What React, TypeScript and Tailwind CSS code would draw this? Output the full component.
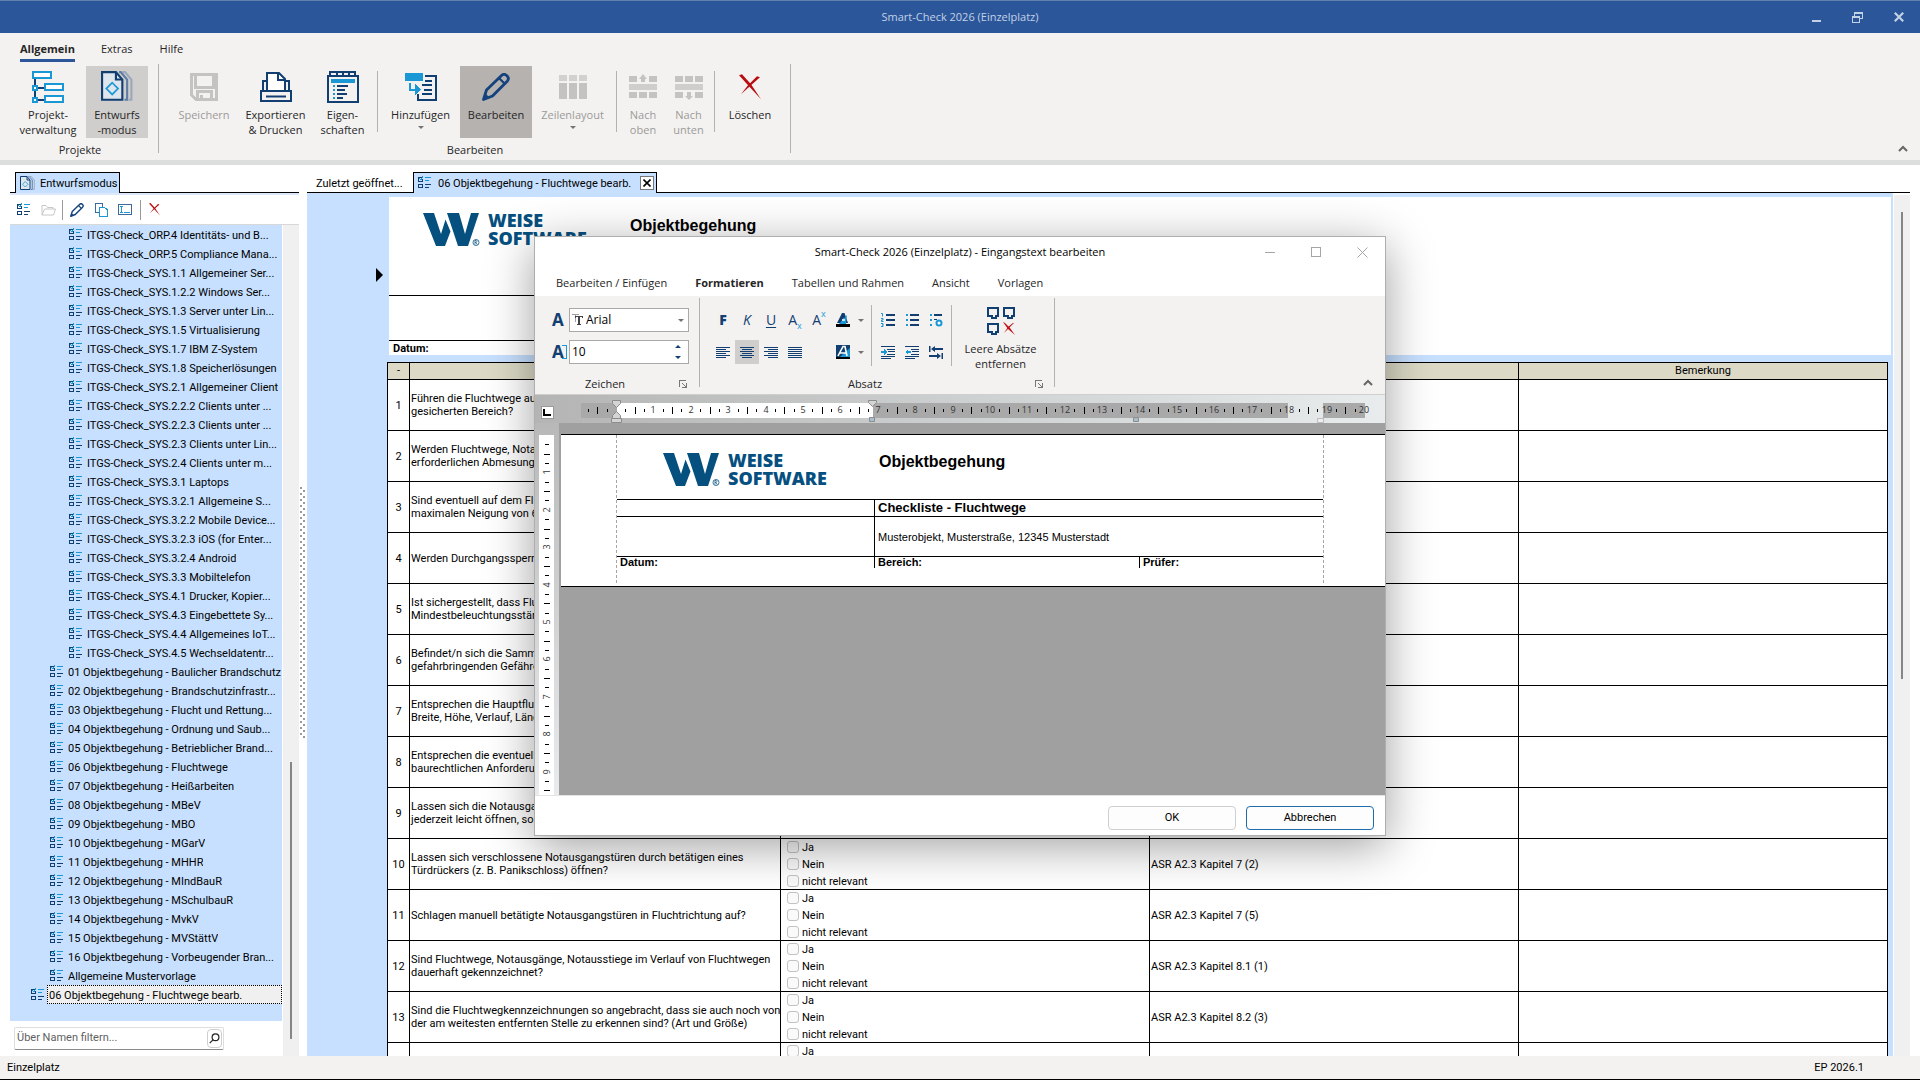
import type { ReactNode } from "react";
import { clsx } from "clsx";

const NAVY = "#123f72";
const CYAN = "#1a98d5";

const treeItems: { label: string; level: number }[] = [
  ...[
    "ORP.4 Identitäts- und B...",
    "ORP.5 Compliance Mana...",
    "SYS.1.1 Allgemeiner Ser...",
    "SYS.1.2.2 Windows Ser...",
    "SYS.1.3 Server unter Lin...",
    "SYS.1.5 Virtualisierung",
    "SYS.1.7 IBM Z-System",
    "SYS.1.8 Speicherlösungen",
    "SYS.2.1 Allgemeiner Client",
    "SYS.2.2.2 Clients unter ...",
    "SYS.2.2.3 Clients unter ...",
    "SYS.2.3 Clients unter Lin...",
    "SYS.2.4 Clients unter m...",
    "SYS.3.1 Laptops",
    "SYS.3.2.1 Allgemeine S...",
    "SYS.3.2.2 Mobile Device...",
    "SYS.3.2.3 iOS (for Enter...",
    "SYS.3.2.4 Android",
    "SYS.3.3 Mobiltelefon",
    "SYS.4.1 Drucker, Kopier...",
    "SYS.4.3 Eingebettete Sy...",
    "SYS.4.4 Allgemeines IoT...",
    "SYS.4.5 Wechseldatentr...",
  ].map(name => ({ label: `ITGS-Check_${name}`, level: 2 })),
  ...[
    "Baulicher Brandschutz",
    "Brandschutzinfrastr...",
    "Flucht und Rettung...",
    "Ordnung und Saub...",
    "Betrieblicher Brand...",
    "Fluchtwege",
    "Heißarbeiten",
    "MBeV",
    "MBO",
    "MGarV",
    "MHHR",
    "MIndBauR",
    "MSchulbauR",
    "MvkV",
    "MVStättV",
    "Vorbeugender Bran...",
  ].map((name, i) => ({ label: `${String(i + 1).padStart(2, "0")} Objektbegehung - ${name}`, level: 1 })),
  { label: "Allgemeine Mustervorlage", level: 1 },
  { label: "06 Objektbegehung - Fluchtwege bearb.", level: 0 },
];

const questions: { lines: string[]; source: string }[] = [
  { lines: ["Führen die Fluchtwege auf möglichst kurzem Weg ins Freie oder", "gesicherten Bereich?"], source: "" },
  { lines: ["Werden Fluchtwege, Notausgänge und Notausstiege in den", "erforderlichen Abmesungen freigehalten?"], source: "" },
  { lines: ["Sind eventuell auf dem Fluchtweg vorhandene Rampen mit einer", "maximalen Neigung von 6 % ausgeführt?"], source: "" },
  { lines: ["Werden Durchgangssperren vermieden?"], source: "" },
  { lines: ["Ist sichergestellt, dass Fluchtwege mit der erforderlichen", "Mindestbeleuchtungsstärke beleuchtet sind?"], source: "" },
  { lines: ["Befindet/n sich die Sammelstelle/n außerhalb des", "gefahrbringenden Gefährdungsbereiches?"], source: "" },
  { lines: ["Entsprechen die Hauptfluchtwege den Anforderungen an", "Breite, Höhe, Verlauf, Länge?"], source: "" },
  { lines: ["Entsprechen die eventuell vorhandenen Nebenfluchtwege den", "baurechtlichen Anforderungen?"], source: "" },
  { lines: ["Lassen sich die Notausgangstüren von innen ohne Hilfsmittel", "jederzeit leicht öffnen, solange sich Personen dort aufhalten?"], source: "" },
  { lines: ["Lassen sich verschlossene Notausgangstüren durch betätigen eines", "Türdrückers (z. B. Panikschloss) öffnen?"], source: "ASR A2.3 Kapitel 7 (2)" },
  { lines: ["Schlagen manuell betätigte Notausgangstüren in Fluchtrichtung auf?"], source: "ASR A2.3 Kapitel 7 (5)" },
  { lines: ["Sind Fluchtwege, Notausgänge, Notausstiege im Verlauf von Fluchtwegen", "dauerhaft gekennzeichnet?"], source: "ASR A2.3 Kapitel 8.1 (1)" },
  { lines: ["Sind die Fluchtwegkennzeichnungen so angebracht, dass sie auch noch von", "der am weitesten entfernten Stelle zu erkennen sind? (Art und Größe)"], source: "ASR A2.3 Kapitel 8.2 (3)" },
];

const answers = ["Ja", "Nein", "nicht relevant"];

export default function App() {
  return (
    <div className="relative flex h-screen flex-col overflow-hidden bg-white font-['Roboto',sans-serif] text-[11px] text-black">
      <TitleBar />
      <Ribbon />
      <main className="flex min-h-0 flex-1 pr-[10px] pl-[10px]">
        <Sidebar />
        <div className="flex w-2 shrink-0 items-center pb-5">
          <Splitter />
        </div>
        <Workspace />
      </main>
      <footer className="flex h-6 shrink-0 items-center justify-between border-b border-black bg-[#f3f2f1] pt-0.5 pr-[56px] pl-[7px]">
        <span>Einzelplatz</span>
        <span>EP 2026.1</span>
      </footer>
      <EditorDialog />
    </div>
  );
}

function TitleBar() {
  return (
    <header className="relative flex h-[33px] shrink-0 items-center justify-center border-t border-[#6080ad] bg-[#2b579a] font-['Open_Sans',sans-serif] text-[#c3d1e6]">
      <h1>Smart-Check 2026 (Einzelplatz)</h1>
      <div className="absolute right-3 flex items-center gap-[22px]">
        <button aria-label="Minimieren" className="flex h-5 w-[19px] items-center justify-center">
          <svg width="10" height="12" shapeRendering="crispEdges"><path d="M0 9h9v2H0z" fill="currentColor" /></svg>
        </button>
        <button aria-label="Verkleinern" className="flex h-5 w-[19px] items-center justify-center">
          <svg width="11" height="11" fill="none" stroke="currentColor" shapeRendering="crispEdges">
            <path d="M.5 4h7v6.500h-7zM0 5h8M2.500 4V.5h8v6h-3M2 1.500h9" />
          </svg>
        </button>
        <button aria-label="Schließen" className="flex h-5 w-[19px] items-center justify-center">
          <svg width="10" height="10" stroke="currentColor" strokeWidth="2.200"><path d="M.8.8l8.400 8.400M9.200.8L.8 9.200" /></svg>
        </button>
      </div>
    </header>
  );
}

function Ribbon() {
  return (
    <section className="relative shrink-0 border-b-[5px] border-[#dcdddd] bg-[#f3f2f1] font-['Open_Sans',sans-serif] text-[#262626]">
      <nav className="flex h-[29px] items-end pl-5">
        <button className="h-[22px] border-b-[3px] border-[#2b579a] pb-px font-bold">Allgemein</button>
        <button className="ml-[26px] h-[22px] pb-1">Extras</button>
        <button className="ml-[27px] h-[22px] pb-1">Hilfe</button>
      </nav>
      <div className="flex h-[98px] pt-0.5">
        <RibbonGroup label="Projekte" className="pl-3 pr-2.5">
          <RibbonButton className="w-[74px] pr-0.5" icon={<ProjectIcon />} lines={["Projekt-", "verwaltung"]} />
          <RibbonButton className="w-[62px] bg-[#cfcecc]" icon={<DraftIcon size={32} />} lines={["Entwurfs", "-modus"]} />
        </RibbonGroup>
        <RibbonGroup label="Bearbeiten" className="pr-2 pl-[9px]">
          <RibbonButton className="w-[72px]" disabled icon={<SaveIcon />} lines={["Speichern"]} />
          <RibbonButton className="w-[71px]" icon={<PrintIcon />} lines={["Exportieren", "& Drucken"]} />
          <RibbonButton className="w-[63px]" icon={<PropertiesIcon />} lines={["Eigen-", "schaften"]} />
          <RibbonDivider />
          <RibbonButton className="w-[79px]" icon={<AddIcon />} lines={["Hinzufügen"]} caret />
          <RibbonButton className="w-[72px] bg-[#b5b2b0]" icon={<PencilIcon size={28} />} lines={["Bearbeiten"]} />
          <RibbonButton className="w-[81px]" disabled icon={<RowLayoutIcon />} lines={["Zeilenlayout"]} caret />
          <RibbonDivider />
          <RibbonButton className="w-[46px]" disabled icon={<MoveIcon direction="up" />} lines={["Nach", "oben"]} />
          <RibbonButton className="w-[45px]" disabled icon={<MoveIcon direction="down" />} lines={["Nach", "unten"]} />
          <RibbonDivider />
          <RibbonButton className="w-[64px]" icon={<DeleteIcon width={22} />} lines={["Löschen"]} />
        </RibbonGroup>
      </div>
      <button aria-label="Menüband reduzieren" className="absolute right-3 bottom-2"><CollapseIcon /></button>
    </section>
  );
}

function RibbonGroup({ label, className, children }: { label: string; className?: string; children: ReactNode }) {
  return (
    <div className={clsx("flex h-[89px] flex-col items-center border-r border-[#b4b2b0]", className)}>
      <div className="flex pt-0.5">{children}</div>
      <span className="pt-1 leading-4">{label}</span>
    </div>
  );
}

function RibbonDivider() {
  return <div className="mx-[3px] mt-[5px] h-[61px] w-px bg-[#b4b2b0]" />;
}

function RibbonButton({ icon, lines, className, disabled, caret }: {
  icon: ReactNode;
  lines: string[];
  className?: string;
  disabled?: boolean;
  caret?: boolean;
}) {
  return (
    <button
      className={clsx("flex h-[72px] flex-col items-center leading-[15px]", disabled && "text-[#9c9a98]", className)}
      disabled={disabled}
    >
      <span className="mb-[3px] flex h-[38px] items-center pt-1">{icon}</span>
      {lines.map(line => <span className="whitespace-nowrap" key={line}>{line}</span>)}
      {caret ? <CaretIcon className="mt-1" /> : null}
    </button>
  );
}

function Sidebar() {
  return (
    <aside className="flex w-[289px] shrink-0 flex-col pt-[7px]">
      <div className="flex h-[21px] border-b border-black pl-[5px]">
        <button className="-mb-px flex h-[21px] w-[105px] items-center gap-[5px] border border-b-0 border-black bg-[#c7e0ff] pl-1">
          <DraftIcon size={15} />
          <span className="pt-0.5 whitespace-nowrap">Entwurfsmodus</span>
        </button>
      </div>
      <div className="flex h-8 shrink-0 items-center border-t-2 border-b border-t-[#dbe9fa] border-b-[#d8d8d8] pl-[7px]">
        <button aria-label="Checkliste"><ChecklistIcon /></button>
        <button aria-label="Öffnen" className="ml-[11px]"><FolderIcon /></button>
        <div className="ml-1.5 h-5 w-px bg-[#9a9a9a]" />
        <button aria-label="Bearbeiten" className="ml-[7px]"><PencilIcon size={14} /></button>
        <button aria-label="Kopieren" className="ml-[11px]"><CopyIcon /></button>
        <button aria-label="Umbenennen" className="ml-[10px]"><RenameIcon /></button>
        <div className="ml-[7px] h-5 w-px bg-[#9a9a9a]" />
        <button aria-label="Löschen" className="ml-2"><DeleteIcon width={11} /></button>
      </div>
      <div className="flex min-h-0 flex-1">
        <div className="flex min-w-0 flex-1 flex-col">
          <ul className="min-h-0 flex-1 overflow-hidden bg-[#c7e0ff]">
            {treeItems.map(({ label, level }) => (
              <li
                className={clsx("flex h-[19px] items-center", level === 2 && "pl-[59px]", level === 1 && "pl-[40px]", level === 0 && "pl-[21px]")}
                key={label}
              >
                <ChecklistIcon />
                <span className={clsx(
                  "h-[19px] min-w-0 overflow-hidden whitespace-nowrap",
                  level === 0 ? "ml-[3px] flex-1 border border-dotted border-black bg-[#f0f0f0] pl-px leading-[19px]" : "ml-[5px] pt-px leading-[19px]",
                )}
                >
                  {label}
                </span>
              </li>
            ))}
          </ul>
          <div className="flex h-[35px] shrink-0 items-center pl-1">
            <div className="flex h-[23px] w-[210px] items-center rounded-xs border border-[#dedede] border-b-[#8a8a8a] pr-px pl-0.5">
              <input
                aria-label="Über Namen filtern"
                className="min-w-0 flex-1 outline-none placeholder:text-[#5f5f5f]"
                placeholder="Über Namen filtern..."
              />
              <button aria-label="Suchen" className="flex h-[19px] w-[15px] items-center justify-center rounded-sm border border-[#cfcfcf]">
                <svg width="11" height="11" fill="none" stroke="#222" strokeWidth="1.200"><circle cx="6.500" cy="4.200" r="3.400" /><path d="M4 6.800L.7 10.200" /></svg>
              </button>
            </div>
          </div>
        </div>
        <div className="ml-px w-4 shrink-0 bg-[#f0f0f0]">
          <div className="ml-[7px] mt-[537px] h-[277px] w-0.5 bg-[#868686]" />
        </div>
      </div>
    </aside>
  );
}

function Splitter() {
  return (
    <svg className="mt-6" width="6" height="252" shapeRendering="crispEdges">
      {Array.from({ length: 42 }, (_, i) => (
        <g fill="#9a9a9a" key={i}>
          <rect height="2" width="2" x="1" y={i * 6} />
          <rect height="2" width="2" x="4" y={i * 6 + 3} />
        </g>
      ))}
    </svg>
  );
}

function Workspace() {
  return (
    <section className="flex min-w-0 flex-1 flex-col pt-[7px]">
      <div className="flex h-[21px] border-b border-black pl-[9px]">
        <button className="w-[97px] pt-1 text-left">Zuletzt geöffnet...</button>
        <div className="-mb-px flex h-[21px] w-[244px] items-center border border-b-0 border-black bg-[#c7e0ff] pr-0.5 pl-1">
          <ChecklistIcon />
          <span className="ml-[7px] flex-1 pt-0.5 whitespace-nowrap">06 Objektbegehung - Fluchtwege bearb.</span>
          <button aria-label="Tab schließen" className="flex size-[14px] items-center justify-center border border-[#777] bg-white">
            <svg width="8" height="8" stroke="#000" strokeWidth="1.600"><path d="M.5.5l7 7M7.500.5l-7 7" /></svg>
          </button>
        </div>
      </div>
      <div className="flex min-h-0 flex-1">
        <div className="flex min-w-0 flex-1 flex-col overflow-hidden bg-[#c7e0ff] pt-1 pr-0.5">
          <div className="flex shrink-0">
            <div className="flex w-[82px] items-center justify-end pr-[6px]">
              <svg className="-mt-0.5" width="7" height="14"><path d="M0 0l7 7-7 7z" /></svg>
            </div>
            <div className="min-w-0 flex-1 bg-white">
              <div className="flex h-[99px] w-[720px] items-start border-b border-black pt-4 pl-[34px]">
                <WeiseLogo />
                <span className="ml-[39px] pt-[3px] font-['Liberation_Sans',sans-serif] text-base leading-5 font-bold">Objektbegehung</span>
              </div>
              <div className="h-[45px] w-[720px] border-b border-black" />
              <p className="h-[14px] pt-px pl-1 leading-[14px] font-bold">Datum:</p>
            </div>
          </div>
          <div className="mt-[7px] pr-[3px] pl-20">
            <table className="w-full table-fixed border-collapse bg-white">
              <colgroup>
                <col className="w-[22px]" />
                <col className="w-[371px]" />
                <col />
                <col />
                <col />
              </colgroup>
              <thead>
                <tr className="h-[17px] bg-[#dcdac6]">
                  {["-", "", "", "", "Bemerkung"].map((heading, i) => (
                    <th className="border border-black p-0 leading-4 font-normal" key={i}>{heading}</th>
                  ))}
                </tr>
              </thead>
              <tbody>
                {questions.map(({ lines, source }, i) => (
                  <tr className="h-[51px]" key={lines[0]}>
                    <td className="border border-black p-0 pt-0.5 text-center">{i + 1}</td>
                    <td className="overflow-hidden border border-black p-0 pl-px leading-[13px] whitespace-nowrap">
                      {lines.map(line => <div key={line}>{line}</div>)}
                    </td>
                    <td className="border border-black p-0"><AnswerOptions row={i + 1} /></td>
                    <td className="border border-black p-0 pt-0.5 pl-px">{source}</td>
                    <td className="border border-black" />
                  </tr>
                ))}
                <tr className="h-[51px]">
                  <td className="border border-black" />
                  <td className="border border-black" />
                  <td className="border border-black p-0"><AnswerOptions row={14} /></td>
                  <td className="border border-black" />
                  <td className="border border-black" />
                </tr>
              </tbody>
            </table>
          </div>
        </div>
        <div className="mt-0.5 ml-px w-4 shrink-0 bg-[#f0f0f0]">
          <div className="mt-[17px] ml-[7px] h-[467px] w-0.5 bg-[#868686]" />
        </div>
      </div>
    </section>
  );
}

function AnswerOptions({ row }: { row: number }) {
  return (
    <div className="flex h-[50px] flex-col justify-between pl-1.5">
      {answers.map(answer => (
        <label className="flex h-4 items-center gap-[3px]" key={answer}>
          <input className="size-3 appearance-none rounded-[3px] border border-[#c2c2c2] bg-[#fafafa]" name={`row-${row}`} type="checkbox" />
          <span className="pt-0.5 leading-3">{answer}</span>
        </label>
      ))}
    </div>
  );
}

function EditorDialog() {
  return (
    <div
      aria-label="Eingangstext bearbeiten"
      className="absolute inset-x-0 top-[236px] mx-auto w-[852px] border border-[#aeaeae] bg-white font-['Open_Sans',sans-serif] text-[#262626] shadow-[0_10px_44px_rgba(0,0,0,0.38)]"
      role="dialog"
    >
      <header className="relative flex h-[30px] items-center justify-center text-black">
        <h2>Smart-Check 2026 (Einzelplatz) - Eingangstext bearbeiten</h2>
        <div className="absolute right-[17px] flex gap-[35px] text-[#a5a5a5]">
          <button aria-label="Minimieren"><svg width="11" height="11" shapeRendering="crispEdges"><path d="M0 5h10v1H0z" fill="currentColor" /></svg></button>
          <button aria-label="Maximieren"><svg width="11" height="11" fill="none" stroke="currentColor"><rect height="9" width="9" x=".5" y=".5" /></svg></button>
          <button aria-label="Schließen"><svg width="11" height="11" stroke="currentColor"><path d="M.5.5l10 10M10.500.5l-10 10" /></svg></button>
        </div>
      </header>
      <nav className="flex h-[29px] items-center gap-7 pt-1 pl-[21px]">
        <button>Bearbeiten / Einfügen</button>
        <button className="font-bold">Formatieren</button>
        <button>Tabellen und Rahmen</button>
        <button>Ansicht</button>
        <button>Vorlagen</button>
      </nav>
      <div className="relative flex h-[99px] border-b border-[#cfcfcf] bg-[#f3f2f1] pt-0.5">
        <FontGroup />
        <ParagraphGroup />
        <button aria-label="Menüband reduzieren" className="absolute right-3 bottom-2"><CollapseIcon /></button>
      </div>
      <HorizontalRuler />
      <div className="flex h-[372px] bg-[#a0a0a0]">
        <VerticalRuler />
        <div className="min-w-0 flex-1 pt-[11px] pl-0.5">
          <EditorPage />
        </div>
      </div>
      <footer className="flex h-10 items-end justify-end gap-2.5 border-t border-[#e4e4e4] pr-[11px] pb-[5px] font-['Roboto',sans-serif] text-black">
        <button className="h-6 w-32 rounded-sm border border-[#cfcfcf] bg-[#fdfdfd]">OK</button>
        <button className="h-6 w-32 rounded-sm border border-[#1f6cab] bg-[#fdfdfd]">Abbrechen</button>
      </footer>
    </div>
  );
}

function FontGroup() {
  return (
    <div className="flex h-[89px] w-[165px] flex-col border-r border-[#b4b2b0] pt-2.5">
      <div className="flex items-center pl-[17px]">
        <span aria-hidden className="w-[17px] text-[17px] leading-6 font-bold text-[#123f72]">A</span>
        <label className="flex h-6 w-[120px] items-center border border-[#acaaa8] bg-white pr-1 pl-0.5 text-black">
          <svg width="12" height="12" shapeRendering="crispEdges">
            <path d="M0 0h7v1H0zM3 1h1v7H3z" fill="#a0a0a0" />
            <path d="M3 2h8v2h-1V3H8v7h1v1H5v-1h1V3H4v1H3z" fill="#444" />
          </svg>
          <select aria-label="Schriftart" className="ml-0.5 flex-1 appearance-none text-xs" defaultValue="Arial">
            <option>Arial</option>
          </select>
          <CaretIcon />
        </label>
      </div>
      <div className="mt-2 flex items-center pl-[17px]">
        <span aria-hidden className="flex w-[17px] items-center text-[17px] leading-6 font-bold text-[#123f72]">
          A
          <svg className="-ml-0.5" width="5" height="14" fill="none" stroke={CYAN} shapeRendering="crispEdges"><path d="M0 .5h4.500v13H0" /></svg>
        </span>
        <label className="flex h-6 w-[120px] items-center border border-[#acaaa8] bg-white pr-[7px] pl-0.5 text-black">
          <input aria-label="Schriftgrad" className="min-w-0 flex-1 text-xs outline-none" defaultValue="10" />
          <svg width="6" height="14" fill={NAVY}><path d="M0 3l3-3 3 3zM0 11l3 3 3-3z" /></svg>
        </label>
      </div>
      <div className="mt-3 flex items-center pr-3">
        <span className="flex-1 pr-1 text-center leading-4">Zeichen</span>
        <LauncherIcon />
      </div>
    </div>
  );
}

function ParagraphGroup() {
  return (
    <div className="flex h-[89px] w-[355px] flex-col border-r border-[#b4b2b0] pl-[11px]">
      <div className="flex h-[78px] shrink-0">
        <div className="mt-2.5 flex flex-col gap-2 text-[#123f72]">
          <div className="flex">
            <ToolButton label="Fett"><span className="text-sm font-extrabold">F</span></ToolButton>
            <ToolButton label="Kursiv"><span className="text-sm italic">K</span></ToolButton>
            <ToolButton label="Unterstrichen"><span className="text-sm underline underline-offset-2">U</span></ToolButton>
            <ToolButton label="Tiefgestellt">
              <span className="text-sm">A</span>
              <span className="self-end text-[9px] leading-3 text-[#1a98d5]">x</span>
            </ToolButton>
            <ToolButton label="Hochgestellt">
              <span className="text-sm">A</span>
              <span className="self-start text-[9px] leading-3 text-[#1a98d5]">x</span>
            </ToolButton>
            <ToolButton label="Schriftfarbe"><FontColorIcon /></ToolButton>
            <button aria-label="Schriftfarbe wählen" className="flex w-3 items-center justify-center"><CaretIcon /></button>
          </div>
          <div className="flex">
            <ToolButton label="Linksbündig"><AlignIcon widths={[14, 10, 14, 10, 14, 10]} /></ToolButton>
            <ToolButton active label="Zentriert"><AlignIcon centered widths={[14, 10, 14, 10, 14, 10]} /></ToolButton>
            <ToolButton label="Rechtsbündig"><AlignIcon right widths={[14, 10, 14, 10, 14, 10]} /></ToolButton>
            <ToolButton label="Blocksatz"><AlignIcon widths={[14, 14, 14, 14, 14, 14]} /></ToolButton>
            <div className="w-6" />
            <ToolButton label="Hintergrundfarbe"><HighlightIcon /></ToolButton>
            <button aria-label="Hintergrundfarbe wählen" className="flex w-3 items-center justify-center"><CaretIcon /></button>
          </div>
        </div>
        <div className="mx-1 mt-[7px] h-[61px] w-px bg-[#b4b2b0]" />
        <div className="mt-2.5 grid h-14 grid-cols-3 gap-y-2">
          <ToolButton label="Nummerierung"><ListIcon kind="number" /></ToolButton>
          <ToolButton label="Aufzählung"><ListIcon kind="bullet" /></ToolButton>
          <ToolButton label="Listeneinstellungen"><ListIcon kind="settings" /></ToolButton>
          <ToolButton label="Einzug vergrößern"><IndentIcon direction="right" /></ToolButton>
          <ToolButton label="Einzug verkleinern"><IndentIcon direction="left" /></ToolButton>
          <ToolButton label="Tabulatoren"><TabsIcon /></ToolButton>
        </div>
        <div className="mx-[3px] mt-[7px] h-[61px] w-px bg-[#b4b2b0]" />
        <button className="flex flex-1 flex-col items-center pt-[9px] pr-2 leading-[15px]">
          <EmptyParagraphIcon />
          <span className="mt-[6px]">Leere Absätze</span>
          <span>entfernen</span>
        </button>
      </div>
      <div className="flex items-center pr-[11px]">
        <span className="flex-1 pr-4 text-center leading-4">Absatz</span>
        <LauncherIcon />
      </div>
    </div>
  );
}

function ToolButton({ label, active, children }: { label: string; active?: boolean; children: ReactNode }) {
  return (
    <button aria-label={label} className={clsx("flex size-6 items-center justify-center", active && "bg-[#cfcecc]")}>
      {children}
    </button>
  );
}

// pixels per centimetre on both rulers
const UNIT = 37.4;

function HorizontalRuler() {
  const origin = 81;
  const quarters = Array.from({ length: 83 }, (_, i) => i - 3);
  return (
    <div className="h-7 bg-linear-to-r from-[#b4b4b4] via-[#cdd0d0] to-[#e9eced]">
      <svg className="block h-7 w-full" shapeRendering="crispEdges">
        <rect fill="#fff" height="12" stroke="#9a9a9a" width="12" x="6.500" y="11.500" />
        <path d="M9 14v6h7" fill="none" stroke="#000" strokeWidth="2" />
        <rect fill="#a9a9a9" height="15" width="36" x="46" y="8" />
        <rect fill="#fff" height="15" width="256" x="82" y="8" />
        <rect fill="#a9a9a9" height="15" width="415" x="338" y="8" />
        <rect fill="#a9a9a9" height="15" width="42" x="788" y="8" />
        {quarters.filter(q => q % 4 !== 0).map(q => (
          <rect
            height={q % 2 === 0 ? 7 : 3}
            key={q}
            width="1"
            x={Math.round(origin + q * UNIT / 4)}
            y={q % 2 === 0 ? 12 : 14}
          />
        ))}
        {Array.from({ length: 20 }, (_, i) => (
          <text fill="#333" fontSize="9" key={i} textAnchor="middle" x={Math.round(origin + (i + 1) * UNIT)} y="18">{i + 1}</text>
        ))}
        <g fill="#d4d4d4" shapeRendering="auto" stroke="#8c8c8c">
          <path d="M77.500 5.500h8v3l-4 4-4-4zM77.500 23.500v-3l4-4 4 4v3zM76.500 23.500h10v4h-10zM333.500 5.500h8v2l-4 4-4-4z" />
          <path d="M334.500 22.500h5v4h-5zM598.500 22.500h5v4h-5z" fill="#a9bcd2" />
          <path d="M782.500 23.500h6v4h-6z" fill="#eee" stroke="#bbb" />
        </g>
      </svg>
    </div>
  );
}

function VerticalRuler() {
  const quarters = Array.from({ length: 38 }, (_, i) => i + 1);
  return (
    <div className="w-6 bg-linear-to-b from-[#b8b8b8] to-[#e9eced] pt-3 pl-1">
      <svg className="block bg-white" height="360" shapeRendering="crispEdges" width="15">
        {quarters.filter(q => q % 4 !== 0).map(q => (
          <rect height="1" key={q} width={q % 2 === 0 ? 6 : 4} x={q % 2 === 0 ? 5 : 6} y={Math.round(q * UNIT / 4)} />
        ))}
        {Array.from({ length: 9 }, (_, i) => (
          <text fill="#333" fontSize="9" key={i} textAnchor="middle" transform={`rotate(-90 11 ${Math.round((i + 1) * UNIT)})`} x="11" y={Math.round((i + 1) * UNIT)}>{i + 1}</text>
        ))}
      </svg>
    </div>
  );
}

function EditorPage() {
  return (
    <article className="h-[153px] border-y border-black bg-white pr-[61px] pl-[55px] font-['Liberation_Sans',sans-serif] text-black">
      <div className="h-[148px] border-x border-dashed border-[#a5a5a5]">
        <div className="flex h-[65px] items-start border-b border-black pt-[18px] pl-[46px]">
          <WeiseLogo />
          <span className="ml-12 pt-px text-base leading-4 font-bold">Objektbegehung</span>
        </div>
        <div className="grid h-[17px] grid-cols-[258px_1fr] border-b border-black">
          <div className="border-r border-black" />
          <div className="pl-[3px] text-[13px] leading-4 font-bold">Checkliste - Fluchtwege</div>
        </div>
        <div className="grid h-10 grid-cols-[258px_1fr] border-b border-black">
          <div className="border-r border-black" />
          <div className="pl-[3px] leading-[40px]">Musterobjekt, Musterstraße, 12345 Musterstadt</div>
        </div>
        <div className="grid h-[11px] grid-cols-[258px_265px_1fr] leading-[11px] font-bold">
          <div className="border-r border-black pl-[3px]">Datum:</div>
          <div className="border-r border-black pl-[3px]">Bereich:</div>
          <div className="pl-[3px]">Prüfer:</div>
        </div>
      </div>
    </article>
  );
}

function WeiseLogo() {
  return (
    <div className="flex w-[168px] shrink-0 items-start text-[#06507f]">
      <svg className="shrink-0" width="57" height="34" fill="currentColor">
        <path d="M0 0h11l7 21 4.500-14.500 5 12L22 33h-9z" />
        <path d="M24 0h12l6 21 6-21h8L45 33H35z" />
        <circle cx="53" cy="29.500" fill="none" r="3" stroke="currentColor" strokeWidth=".8" />
        <path d="M52 31.500v-4h1.200q1.200 1 0 2H52M53 29.500l1.200 2" fill="none" stroke="currentColor" strokeWidth=".7" />
      </svg>
      <div className="-mt-0.5 ml-2 font-['Open_Sans',sans-serif] text-[18px] leading-[18px] font-extrabold">
        <div>WEISE</div>
        <div>SOFTWARE</div>
      </div>
    </div>
  );
}

function CaretIcon({ className }: { className?: string }) {
  return <svg className={className} fill="#757371" height="3" width="6"><path d="M0 0h6L3 3z" /></svg>;
}

function CollapseIcon() {
  return <svg fill="none" height="7" stroke="#666" strokeWidth="2" width="10"><path d="M1 6l4-4 4 4" /></svg>;
}

function LauncherIcon() {
  return (
    <svg fill="none" height="8" shapeRendering="crispEdges" stroke="#777" width="8">
      <path d="M0 .5h7M.5 0v7M3 3l4 4M7.500 3v5M3 7.500h5" />
    </svg>
  );
}

function ChecklistIcon() {
  return (
    <svg className="shrink-0" fill="none" height="14" shapeRendering="crispEdges" width="13">
      <path d="M3.500 1H.5v4h4V3" stroke={NAVY} />
      <path d="M1.500 2.500L3 4l2-3.500" stroke={CYAN} />
      <path d="M.5 8.500h4v3h-4z" stroke={NAVY} />
      <path d="M7 1.500h6M7 4.500h4" stroke={CYAN} />
      <path d="M7 8.500h6M7 11.500h4" stroke={NAVY} />
    </svg>
  );
}

function ProjectIcon() {
  return (
    <svg fill="none" height="32" shapeRendering="crispEdges" strokeWidth="2" width="32">
      <path d="M3 8v20M6 17h6M6 29h6" stroke={NAVY} />
      <path d="M1 1h18v6H1zM13 13h18v6H13zM13 25h18v6H13z" fill="#fff" stroke={CYAN} />
      <path d="M1 15h4v4H1zM1 27h4v4H1z" fill="#fff" stroke={CYAN} />
    </svg>
  );
}

function DraftIcon({ size }: { size: number }) {
  return (
    <svg fill="none" height={size} viewBox="0 0 30 30" width={size}>
      <path d="M20 1h2.500l6 7v19H26" stroke="#9aa8bc" strokeWidth="2" />
      <path d="M17 1h1.500l6 7v19H22" stroke="#5f7da3" strokeWidth="2" />
      <path d="M1 1h13l6 7v19H1z" fill="#dfe5ec" stroke={NAVY} strokeWidth="2" />
      <path d="M14 1v7h6" stroke={NAVY} strokeWidth="2" />
      <path d="M10.500 11l5.500 5.500-5.500 5.500L5 16.500z" stroke={CYAN} strokeWidth="1.600" />
    </svg>
  );
}

function SaveIcon() {
  return (
    <svg fill="none" height="28" shapeRendering="crispEdges" stroke="#c4c3c2" strokeWidth="3" width="28">
      <path d="M1.500 1.500h25v25H6l-4.500-4.500z" />
      <path d="M5 2v12h18V2" />
      <path d="M7.500 27v-8.500h14V27" />
      <path d="M11.500 22v5" />
    </svg>
  );
}

function PrintIcon() {
  return (
    <svg fill="none" height="30" stroke={NAVY} strokeWidth="2" width="32">
      <path d="M7 19V1h12l6 6v12" fill="#fff" />
      <path d="M18 1v7h7" />
      <path d="M7 9H3v10M25 9h4v10" />
      <path d="M1 19h30v10H1z" fill="#f3f2f1" />
      <path d="M6 24.500h20" />
    </svg>
  );
}

function PropertiesIcon() {
  return (
    <svg fill="none" height="32" shapeRendering="crispEdges" width="32">
      <path d="M1 5h30v26H1z" stroke={NAVY} strokeWidth="2" />
      <path d="M3 1h26M3 0v5M10 0v5M16 0v5M22 0v5M28 0v5" stroke={NAVY} strokeWidth="2" />
      <path d="M4 8h24v4H4z" fill={CYAN} />
      <path d="M6 15h2M6 19h2M6 23h2M6 27h2" stroke={CYAN} strokeWidth="2" />
      <path d="M10 15h11M10 19h8M10 23h10M10 27h6" stroke={NAVY} strokeWidth="2" />
    </svg>
  );
}

function AddIcon() {
  return (
    <svg fill="none" height="28" shapeRendering="crispEdges" width="32">
      <path d="M20 3h11v24H13v-6" stroke={NAVY} strokeWidth="2" />
      <path d="M20 8h7M17 12h10M19 17h8M17 21h10" stroke={NAVY} strokeWidth="2" />
      <path d="M0 0h18v8H0z" fill={CYAN} />
      <path d="M5 10v7h7" stroke={CYAN} strokeWidth="2" />
      <path d="M10 11l6 6-6 5z" fill={CYAN} />
    </svg>
  );
}

function PencilIcon({ size }: { size: number }) {
  return (
    <svg fill="none" height={size} stroke="#14427d" strokeLinejoin="round" strokeWidth="2.800" viewBox="0 0 28 28" width={size}>
      <path d="M1.500 26.500l3-9.500L19.500 2.500c2-1.800 4-1.200 5.500.3s2 3.500.2 5.500L10.500 23z" />
      <path d="M17 5l6 6" strokeWidth="2.200" />
      <path d="M1 27l2-7 5 5z" fill="#14427d" stroke="none" />
    </svg>
  );
}

function RowLayoutIcon() {
  return (
    <svg fill="#c4c3c2" height="24" shapeRendering="crispEdges" width="28">
      <path d="M0 0h8v6H0zM10 0h8v6h-8zM20 0h8v6h-8z" fill="#d2d1d0" />
      <path d="M0 8h8v16H0zM10 8h8v16h-8zM20 8h8v16h-8z" />
    </svg>
  );
}

function MoveIcon({ direction }: { direction: "up" | "down" }) {
  return (
    <svg fill="#c4c3c2" height="26" viewBox="0 -2 28 26" width="28">
      <path d="M0 8h28v6H0z" fill="#cfcecd" />
      {direction === "up"
        ? <path d="M0 0h8v6H0zM20 0h8v6h-8zM0 16h8v6H0zM10 16h8v6h-8zM20 16h8v6h-8zM14-2l4 5h-2v3h-4V3h-2z" />
        : <path d="M0 0h8v6H0zM10 0h8v6h-8zM20 0h8v6h-8zM0 16h8v6H0zM20 16h8v6h-8zM14 24l4-4h-2v-4h-4v4h-2z" />}
    </svg>
  );
}

function DeleteIcon({ width }: { width: number }) {
  return (
    <svg fill="#b80d10" height={width * 1.15} viewBox="0 0 22 25" width={width}>
      <path d="M0 1l3-1 9 10 10 15L10 12z" />
      <path d="M18 2l3 1-9 8L2 20l7-9z" />
    </svg>
  );
}

function FolderIcon() {
  return (
    <svg fill="none" height="12" stroke="#c9c8c7" width="15">
      <path d="M1 11V1.500h4l1.500 2H12V5M1 11l2.500-6H14.500l-2 6z" />
    </svg>
  );
}

function CopyIcon() {
  return (
    <svg fill="#fff" height="14" shapeRendering="crispEdges" width="13">
      <path d="M.5.500h7v9h-7z" stroke="#3d6a9e" />
      <path d="M4.500 4.500h5l2.500 2v7H4.500z" stroke={CYAN} />
    </svg>
  );
}

function RenameIcon() {
  return (
    <svg fill="none" height="12" shapeRendering="crispEdges" width="15">
      <path d="M.5.500h13v10H.5z" stroke="#3d6a9e" />
      <path d="M2 2.500h3M3.500 3v5M2 8.500h3M6 8.500h6" stroke={CYAN} />
    </svg>
  );
}

function FontColorIcon() {
  return (
    <svg height="16" width="14">
      <path d="M1 11L6 1h2.500L12 11H9L7.500 6 5 11z" fill={NAVY} />
      <path d="M3 12L11 3l-1 9z" fill={CYAN} />
      <path d="M6 8h3" stroke="#fff" strokeWidth="1.500" />
      <path d="M0 12h14v3H0z" />
    </svg>
  );
}

function HighlightIcon() {
  return (
    <svg height="15" width="14">
      <path d="M0 0h14v12H0z" fill={NAVY} />
      <path d="M4 12l10-9v9z" fill={CYAN} />
      <path d="M2 11L7 1.500h2L11 11M4 8h6" fill="none" stroke="#fff" strokeWidth="1.600" />
      <path d="M0 12h14v2H0z" />
    </svg>
  );
}

function AlignIcon({ widths, centered, right }: { widths: number[]; centered?: boolean; right?: boolean }) {
  return (
    <svg fill={NAVY} height="11" shapeRendering="crispEdges" width="14">
      {widths.map((w, i) => <rect height="1" key={i} width={w} x={centered ? (14 - w) / 2 : right ? 14 - w : 0} y={i * 2} />)}
    </svg>
  );
}

function ListIcon({ kind }: { kind: "number" | "bullet" | "settings" }) {
  return (
    <svg fill={NAVY} height="14" width="14">
      {kind === "number"
        ? <path d="M0 .5h1.500v3M0 5.500h2v1.500H.5v1.500h2M0 10.500h2v3H0M1 12h1" fill="none" stroke={CYAN} />
        : <path d="M1 1h2v2H1zM1 6h2v2H1zM1 11h2v2H1z" fill={CYAN} />}
      {kind === "settings"
        ? (
            <>
              <path d="M5 1h8v2H5zM5 6h3v1H5z" />
              <circle cx="10" cy="10" fill="#fff" r="2.500" stroke={CYAN} strokeWidth="2" />
            </>
          )
        : <path d="M5 1h9v2H5zM5 6h9v2H5zM5 11h9v2H5z" />}
    </svg>
  );
}

function IndentIcon({ direction }: { direction: "left" | "right" }) {
  return (
    <svg fill={NAVY} height="13" shapeRendering="crispEdges" width="14">
      <path d="M0 0h14v1H0zM6 3h8v1H6zM7 5h7v1H7zM6 8h8v1H6zM0 10h14v1H0zM0 12h10v1H0z" />
      {direction === "right"
        ? <path d="M0 5h3V3l3 3-3 3V7H0z" fill={CYAN} />
        : <path d="M6 5H3V3L0 6l3 3V7h3z" fill={CYAN} />}
    </svg>
  );
}

function TabsIcon() {
  return (
    <svg fill={NAVY} height="13" width="14">
      <path d="M0 0h1.500v6H0zM2 3l4-3v2h8v2H6v2zM12.500 7H14v6h-1.500zM12 10L8 7v2H0v2h8v2z" />
    </svg>
  );
}

function EmptyParagraphIcon() {
  return (
    <svg fill="none" height="28" shapeRendering="crispEdges" stroke={NAVY} strokeWidth="2" width="28">
      <path d="M1 1h10v8H9v2H5V9H1zM17 1h10v8h-2v2h-4V9h-4zM1 17h10v8H9v2H5v-2H1z" />
      <g fill="#c00f12" shapeRendering="auto" stroke="none">
        <path d="M16 15l2 1 5 5 5 7-7-6z" />
        <path d="M26 16h1l-5 5-5 5 4-6z" />
      </g>
    </svg>
  );
}
